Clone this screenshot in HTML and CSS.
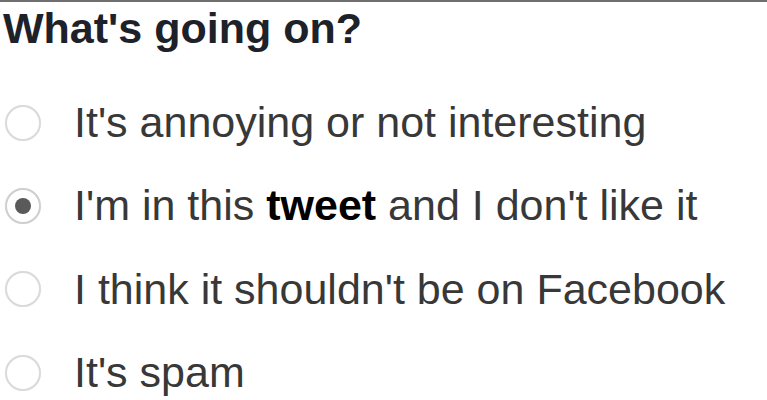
FILE: index.html
```html
<!DOCTYPE html>
<html>
<head>
<meta charset="utf-8">
<link rel="stylesheet" href="styles.css">
</head>
<body>
<div class="panel">
  <h1 class="title">What's going on?</h1>
  <ul class="options">
    <li class="option"><span class="radio"></span><span class="label">It's annoying or not interesting</span></li>
    <li class="option"><span class="radio checked"></span><span class="label">I'm in this <b class="strong">tweet</b> and I don't like it</span></li>
    <li class="option"><span class="radio"></span><span class="label">I think it shouldn't be on Facebook</span></li>
    <li class="option"><span class="radio"></span><span class="label">It's spam</span></li>
  </ul>
</div>
</body>
</html>
```
FILE: styles.css
```css
html, body {
  margin: 0;
  padding: 0;
  background: #ffffff;
}
.panel {
  width: 767px;
  height: 400px;
  box-sizing: border-box;
  border-top: 2px solid #6f6f6f;
  overflow: hidden;
  font-family: "Liberation Sans", Arial, sans-serif;
}
.title {
  margin: 0;
  padding: 2px 0 0 3px;
  font-size: 43px;
  line-height: 48px;
  font-weight: bold;
  color: #1d2129;
}
.options {
  list-style: none;
  margin: 29px 0 0 0;
  padding: 0;
}
.option {
  height: 83.4px;
  display: flex;
  align-items: center;
  gap: 33px;
  padding-left: 5px;
}
.radio {
  width: 36px;
  height: 36px;
  box-sizing: border-box;
  border-radius: 50%;
  border: 2px solid #dadada;
  background: #fff;
  box-shadow: 0 0 1px rgba(0,0,0,0.08);
  display: flex;
  align-items: center;
  justify-content: center;
  flex-shrink: 0;
}
.radio.checked {
  border-color: #cfcfcf;
}
.radio.checked::after {
  content: "";
  width: 16px;
  height: 16px;
  border-radius: 50%;
  background: #5a5a5a;
}
.label {
  font-size: 43px;
  line-height: 83.4px;
  color: #383838;
  white-space: nowrap;
}
.strong {
  font-weight: bold;
  color: #000;
}
```
